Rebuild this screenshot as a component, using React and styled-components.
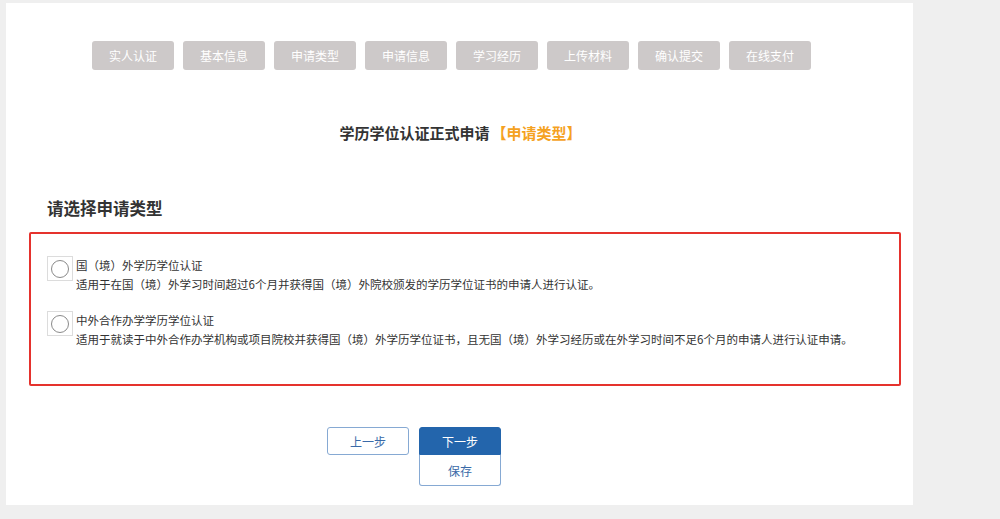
import React, { useState } from "react";
import styled, { createGlobalStyle } from "styled-components";

const Global = createGlobalStyle`
  html, body { margin: 0; padding: 0; background: #efefef; }
  body { font-family: "Microsoft YaHei", "Noto Sans CJK SC", "Noto Sans", sans-serif; color: #333; }
`;

const Page = styled.div`
  width: 1000px;
  height: 519px;
  padding: 3px 0 0 6px;
  box-sizing: border-box;
`;

const Panel = styled.div`
  width: 907px;
  height: 502px;
  background: #fff;
  box-sizing: border-box;
  padding-top: 38px;
  display: flex;
  flex-direction: column;
`;

const Steps = styled.div`
  display: flex;
  gap: 9px;
  padding-left: 86px;
`;

const Step = styled.div`
  width: 82px;
  height: 29px;
  border-radius: 3px;
  background: #cdc9c9;
  color: #fff;
  font-size: 12px;
  display: flex;
  align-items: center;
  justify-content: center;
`;

const Title = styled.h1`
  margin: 53px 0 0 0;
  font-size: 15px;
  line-height: 20px;
  font-weight: bold;
  color: #333;
  text-align: center;
  padding-left: 2px;
`;

const Accent = styled.span`
  color: #f5a21f;
  margin-left: 2px;
`;

const Heading = styled.h2`
  margin: 53px 0 0 41px;
  font-size: 16.5px;
  line-height: 24px;
  font-weight: bold;
  color: #333;
`;

const Options = styled.div`
  margin: 12px 0 0 23px;
  width: 872px;
  height: 154px;
  box-sizing: border-box;
  border: 2px solid #e5322d;
  border-radius: 2px;
  padding: 22px 0 0 16px;
  display: flex;
  flex-direction: column;
  gap: 17px;
`;

const Option = styled.label`
  display: flex;
  align-items: flex-start;
  cursor: pointer;
`;

const RadioBox = styled.span`
  width: 26px;
  height: 25px;
  box-sizing: border-box;
  border: 1px solid #dcdcdc;
  display: flex;
  align-items: center;
  justify-content: center;
  flex-shrink: 0;
  margin-right: 3px;
`;

const Circle = styled.span`
  width: 18px;
  height: 18px;
  border-radius: 50%;
  border: 1.5px solid #8a8a8a;
  box-sizing: border-box;
  background: ${(p) => (p.$on ? "radial-gradient(circle, #2365ac 0 4px, #fff 4.5px)" : "#fff")};
`;

const OptText = styled.div`
  display: flex;
  flex-direction: column;
  font-size: 11.5px;
  line-height: 19px;
  color: #333;
`;

const Actions = styled.div`
  margin: 41px 0 0 321px;
  display: flex;
  gap: 10px;
  align-items: flex-start;
`;

const Column = styled.div`
  display: flex;
  flex-direction: column;
`;

const Btn = styled.button`
  width: 82px;
  height: ${(p) => (p.$tall ? "31px" : "28px")};
  box-sizing: border-box;
  border-radius: ${(p) => (p.$top ? "3px 3px 0 0" : p.$bottom ? "0 0 3px 3px" : "3px")};
  border: 1px solid ${(p) => (p.$primary ? "#2365ac" : "#86a9d3")};
  border-top-width: ${(p) => (p.$bottom ? "0" : "1px")};
  background: ${(p) => (p.$primary ? "#2365ac" : "#fff")};
  color: ${(p) => (p.$primary ? "#fff" : "#3a6aa8")};
  font-family: inherit;
  font-size: 12px;
  padding: 0;
  cursor: pointer;
`;

const steps = ["实人认证", "基本信息", "申请类型", "申请信息", "学习经历", "上传材料", "确认提交", "在线支付"];

const opts = [
  {
    t: "国（境）外学历学位认证",
    d: "适用于在国（境）外学习时间超过6个月并获得国（境）外院校颁发的学历学位证书的申请人进行认证。",
  },
  {
    t: "中外合作办学学历学位认证",
    d: "适用于就读于中外合作办学机构或项目院校并获得国（境）外学历学位证书，且无国（境）外学习经历或在外学习时间不足6个月的申请人进行认证申请。",
  },
];

export default function App() {
  const [sel, setSel] = useState(-1);
  return (
    <Page>
      <Global />
      <Panel>
        <Steps>
          {steps.map((s) => (
            <Step key={s}>{s}</Step>
          ))}
        </Steps>
        <Title>
          学历学位认证正式申请<Accent>【申请类型】</Accent>
        </Title>
        <Heading>请选择申请类型</Heading>
        <Options>
          {opts.map((o, i) => (
            <Option key={i} onClick={() => setSel(i)}>
              <RadioBox>
                <Circle $on={sel === i} />
              </RadioBox>
              <OptText>
                <span>{o.t}</span>
                <span>{o.d}</span>
              </OptText>
            </Option>
          ))}
        </Options>
        <Actions>
          <Btn>上一步</Btn>
          <Column>
            <Btn $primary $top>下一步</Btn>
            <Btn $bottom $tall>保存</Btn>
          </Column>
        </Actions>
      </Panel>
    </Page>
  );
}
